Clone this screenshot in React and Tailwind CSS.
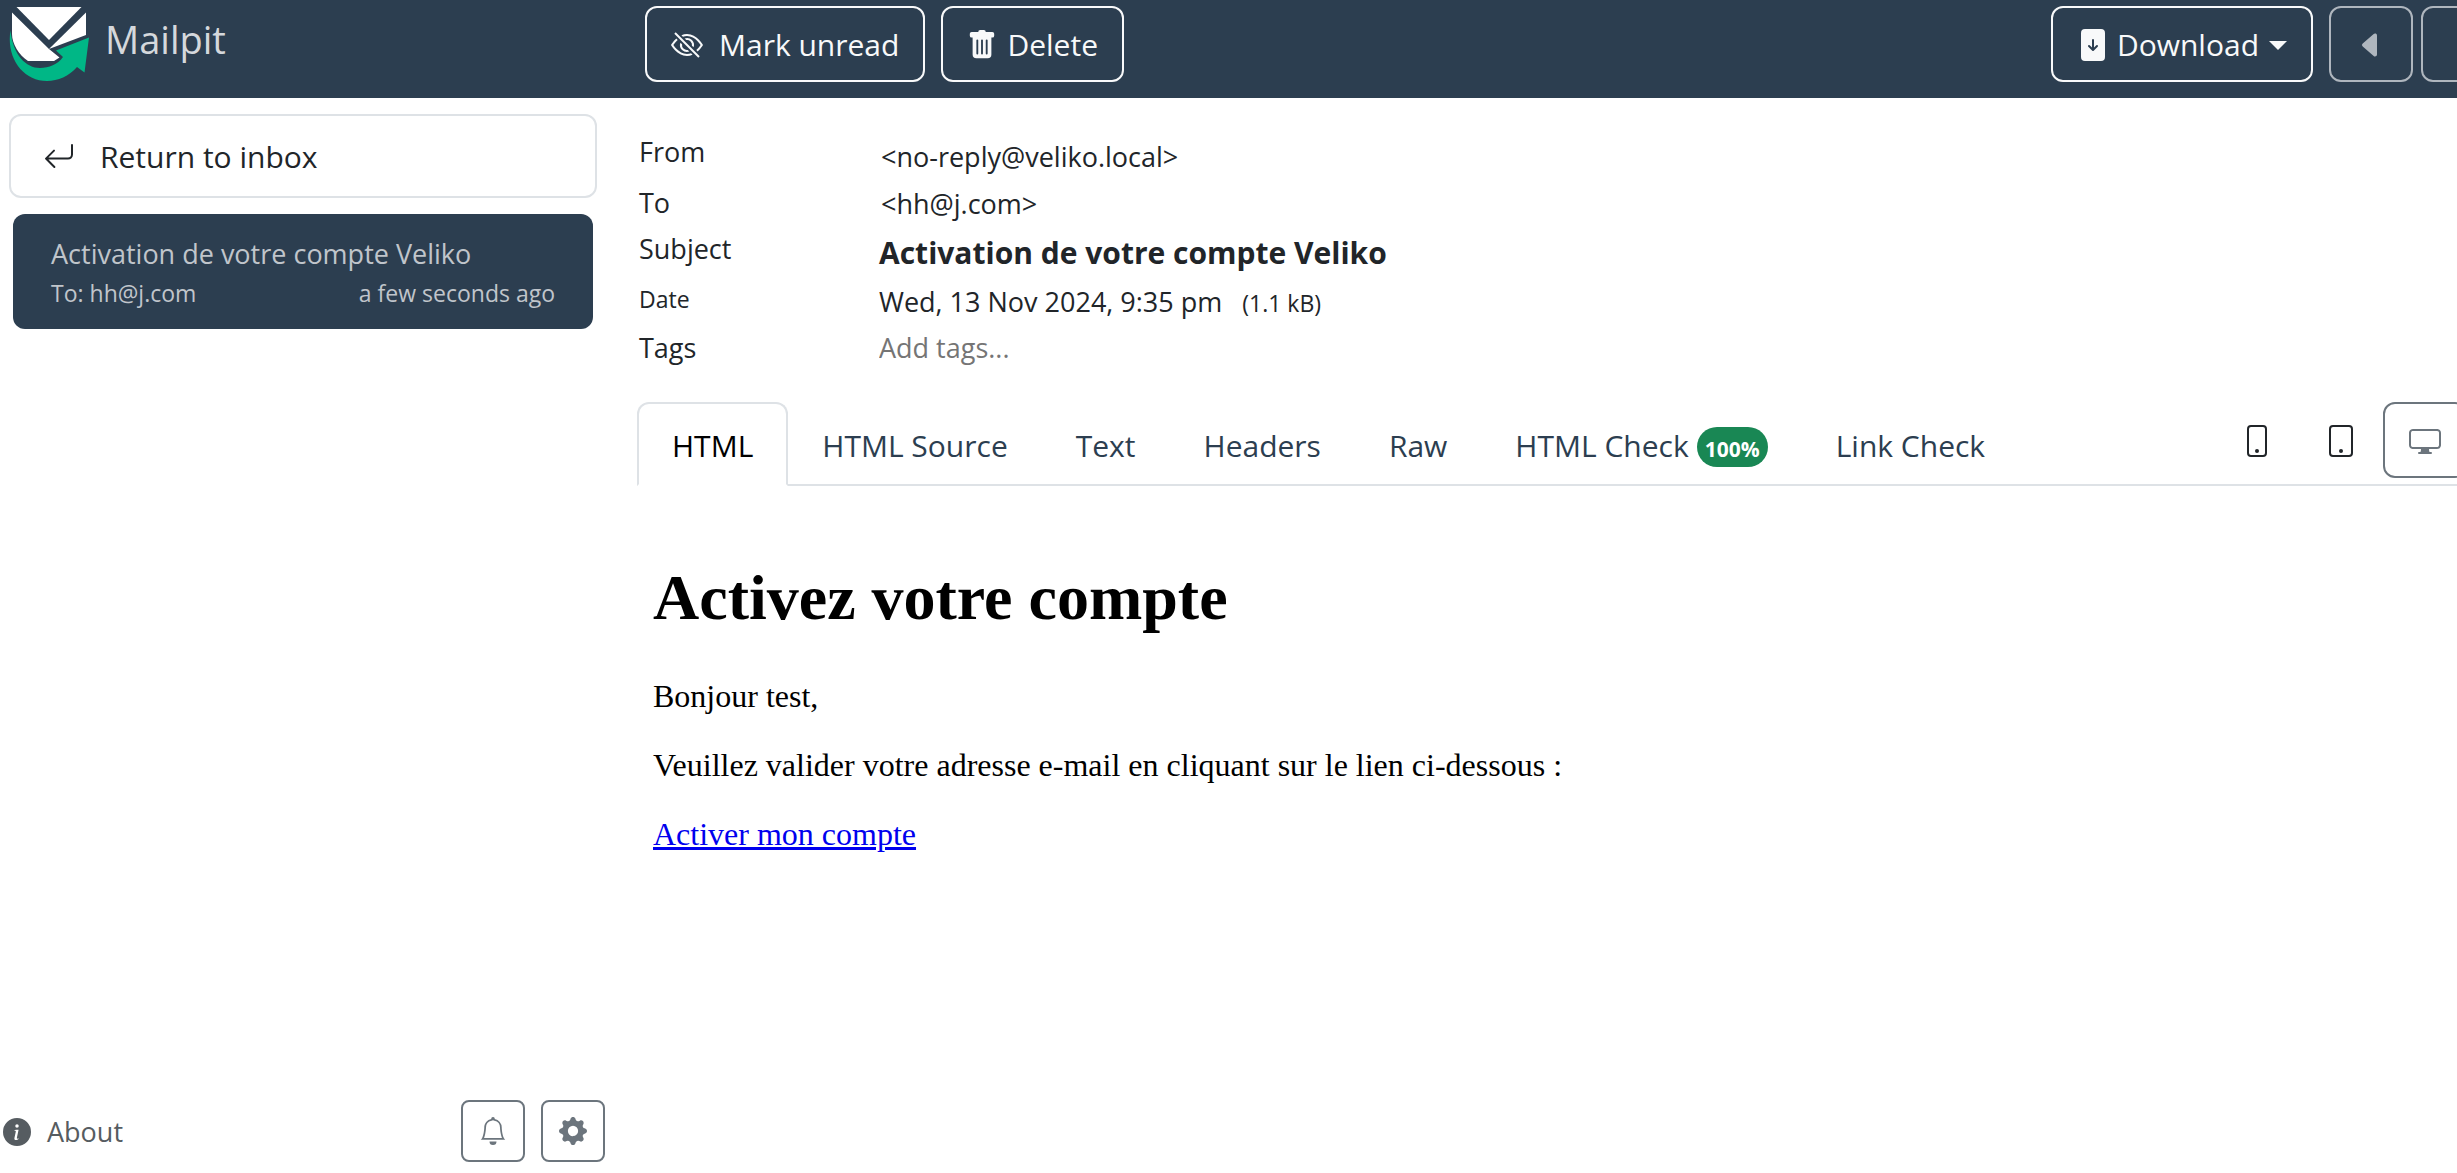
import {
  BsArrowReturnLeft,
  BsBell,
  BsCaretLeftFill,
  BsCaretRightFill,
  BsDisplay,
  BsEyeSlash,
  BsFileArrowDownFill,
  BsGearFill,
  BsInfoCircleFill,
  BsPhone,
  BsTablet,
  BsTrashFill,
} from "react-icons/bs";

const navButton =
  "flex h-[76px] shrink-0 items-center rounded-xl border-2 border-[#f8f9fa] px-6 pt-0.5 text-[30px] leading-[48px] text-[#f8f9fa]";

const squareButton =
  "flex h-[62px] w-16 items-center justify-center rounded-lg border-2 border-[#6c757d] text-[#6c757d]";

function Logo() {
  return (
    <svg viewBox="0 0 80 74" className="h-[74px] w-20 shrink-0" aria-hidden="true">
      <path d="M7.500 0H72.500L40 33Z" fill="#fff" />
      <path d="M3 5.500L40 42L50.500 50.500L45 54H19C10 48 3 37 3 27Z" fill="#fff" />
      <path d="M77 5.500V28L40 42Z" fill="#fff" />
      <path
        d="M1.500 23.500C4 48 17 61 31 61C40 61 48.500 57.500 54 50L47 43.500L80 30.500L75.500 65.500L68 60C60 69 49 74 38 74C14 74-3 51 1.500 23.500Z"
        fill="#00b786"
      />
    </svg>
  );
}

function Header() {
  return (
    <header className="flex h-[98px] shrink-0 bg-[#2c3e50] pt-1.5">
      <a href="#home" className="flex w-[645px] shrink-0 items-start gap-4 pl-[9px] pt-px text-[#d5d8dc]">
        <Logo />
        <span className="text-[38px] leading-[64px]">Mailpit</span>
      </a>
      <div className="flex flex-1 gap-4">
        <button type="button" className={navButton}>
          <BsEyeSlash className="mr-4 size-8" />
          Mark unread
        </button>
        <button type="button" className={navButton}>
          <BsTrashFill className="mr-2.5 size-[30px]" />
          Delete
        </button>
      </div>
      <div className="flex gap-2">
        <button type="button" className={navButton + " mr-2"}>
          <BsFileArrowDownFill className="mr-2 size-8" />
          Download
          <svg viewBox="0 0 18 9" className="ml-2.5 h-[9px] w-[18px]" fill="currentColor" aria-hidden="true">
            <path d="M0 0H18L9 9Z" />
          </svg>
        </button>
        <button
          type="button"
          aria-label="Previous message"
          className="flex h-[76px] w-[84px] items-center justify-center rounded-xl border-2 border-[#afb6be] pt-0.5 text-[#afb6be]"
        >
          <BsCaretLeftFill className="size-8" />
        </button>
        <button
          type="button"
          aria-label="Next message"
          className="flex h-[76px] w-[84px] items-center justify-center rounded-xl border-2 border-[#afb6be] pt-0.5 text-[#afb6be]"
        >
          <BsCaretRightFill className="size-8" />
        </button>
      </div>
    </header>
  );
}

function Sidebar() {
  return (
    <aside className="flex w-[605px] shrink-0 flex-col pb-[11px] pt-4">
      <a
        href="#inbox"
        className="ml-[9px] mr-2 flex h-[84px] items-center gap-[25px] rounded-xl border-2 border-[#dee2e6] px-8 pt-0.5 text-[30px] leading-[48px] text-[#212529]"
      >
        <BsArrowReturnLeft className="size-8" />
        Return to inbox
      </a>
      <a
        href="#message"
        className="ml-[13px] mr-3 mt-4 flex h-[115px] flex-col rounded-xl bg-[#2c3e50] px-[38px] pt-5 text-[#c0c5cb]"
      >
        <span className="text-[27px] leading-[40px]">Activation de votre compte Veliko</span>
        <span className="flex justify-between text-[23px] leading-[38px]">
          <span>To: hh@j.com</span>
          <span>a few seconds ago</span>
        </span>
      </a>
      <div className="mt-auto flex items-center gap-4">
        <a href="#about" className="flex flex-1 items-center gap-4 pl-[3px] pt-0.5 text-[27px] leading-[40px] text-[#565c61]">
          <BsInfoCircleFill className="size-7" />
          About
        </a>
        <button type="button" aria-label="Notifications" className={squareButton}>
          <BsBell className="size-7" />
        </button>
        <button type="button" aria-label="Settings" className={squareButton}>
          <BsGearFill className="size-7" />
        </button>
      </div>
    </aside>
  );
}

function Details() {
  return (
    <table className="ml-0.5 mt-[34px] text-left align-top text-[27px] leading-[40px] text-[#212529]">
      <tbody>
        <tr className="h-[51px] align-top">
          <th scope="row" className="w-[240px] font-normal">From</th>
          <td className="pl-0.5 pt-[5px]">&lt;no-reply@veliko.local&gt;</td>
        </tr>
        <tr className="h-[46px] align-top">
          <th scope="row" className="font-normal">To</th>
          <td className="pl-0.5 pt-px">&lt;hh@j.com&gt;</td>
        </tr>
        <tr className="h-[51px] align-top">
          <th scope="row" className="font-normal">Subject</th>
          <td className="pt-0.5 text-[30px] font-bold leading-[44px]">Activation de votre compte Veliko</td>
        </tr>
        <tr className="h-12 align-top">
          <th scope="row" className="text-[23px] font-normal leading-[38px]">Date</th>
          <td className="pt-0.5">
            Wed, 13 Nov 2024, 9:35 pm
            <span className="ml-5 text-[23px]">(1.1 kB)</span>
          </td>
        </tr>
        <tr className="h-10 align-top">
          <th scope="row" className="font-normal">
            <label htmlFor="tags">Tags</label>
          </th>
          <td>
            <input
              id="tags"
              type="text"
              placeholder="Add tags..."
              className="block h-10 w-96 bg-transparent outline-none placeholder:text-[#757575]"
            />
          </td>
        </tr>
      </tbody>
    </table>
  );
}

const tabs = ["HTML", "HTML Source", "Text", "Headers", "Raw", "HTML Check", "Link Check"];

function Tabs() {
  return (
    <div className="mt-[34px] flex h-[84px] items-start border-b-2 border-[#dee2e6]">
      <div role="tablist" className="flex">
        {tabs.map((tab, i) => (
          <button
            key={tab}
            type="button"
            role="tab"
            aria-selected={i === 0}
            className={
              i === 0
                ? "flex h-[84px] items-start rounded-t-xl border-2 border-[#dee2e6] border-b-white bg-white px-[33px] pt-[18px] text-[30px] leading-[48px] text-black"
                : "flex h-[82px] items-start border-2 border-transparent px-8 pt-[18px] text-[30px] leading-[48px] text-[#2c3e50]"
            }
          >
            {tab}
            {tab === "HTML Check" && (
              <span className="ml-2 mt-[5px] h-10 rounded-full bg-[#198754] px-2 text-[21px] font-bold leading-[44px] text-white">
                100%
              </span>
            )}
          </button>
        ))}
      </div>
      <div className="ml-auto mr-[38px] flex">
        <button type="button" aria-label="Phone preview" className="flex h-[76px] w-[84px] items-center justify-center pt-0.5 text-[#212529]">
          <BsPhone className="size-8" />
        </button>
        <button type="button" aria-label="Tablet preview" className="flex h-[76px] w-[84px] items-center justify-center pt-0.5 text-[#212529]">
          <BsTablet className="size-8" />
        </button>
        <button
          type="button"
          aria-label="Desktop preview"
          className="flex h-[76px] w-[84px] items-center justify-center rounded-xl border-2 border-[#6c757d] pt-0.5 text-[#6c757d]"
        >
          <BsDisplay className="size-8" />
        </button>
      </div>
    </div>
  );
}

function MessageBody() {
  return (
    <article className="px-4 pt-[75px] font-['Liberation_Serif',serif] text-[32px] leading-[37px] text-black">
      <h1 className="mb-[43px] text-[64px] font-bold leading-[74px]">Activez votre compte</h1>
      <p className="mb-8">Bonjour test,</p>
      <p className="mb-8">Veuillez valider votre adresse e-mail en cliquant sur le lien ci-dessous :</p>
      <p>
        <a href="#activate" className="text-[#0000ee] underline">Activer mon compte</a>
      </p>
    </article>
  );
}

export default function App() {
  return (
    <div className="h-screen overflow-hidden bg-white font-['Open_Sans','Noto_Sans',sans-serif]">
      <div className="flex h-full w-[calc(100%+48px)] flex-col">
        <Header />
        <div className="flex min-h-0 flex-1 gap-8">
          <Sidebar />
          <main className="min-w-0 flex-1">
            <Details />
            <Tabs />
            <MessageBody />
          </main>
        </div>
      </div>
    </div>
  );
}
